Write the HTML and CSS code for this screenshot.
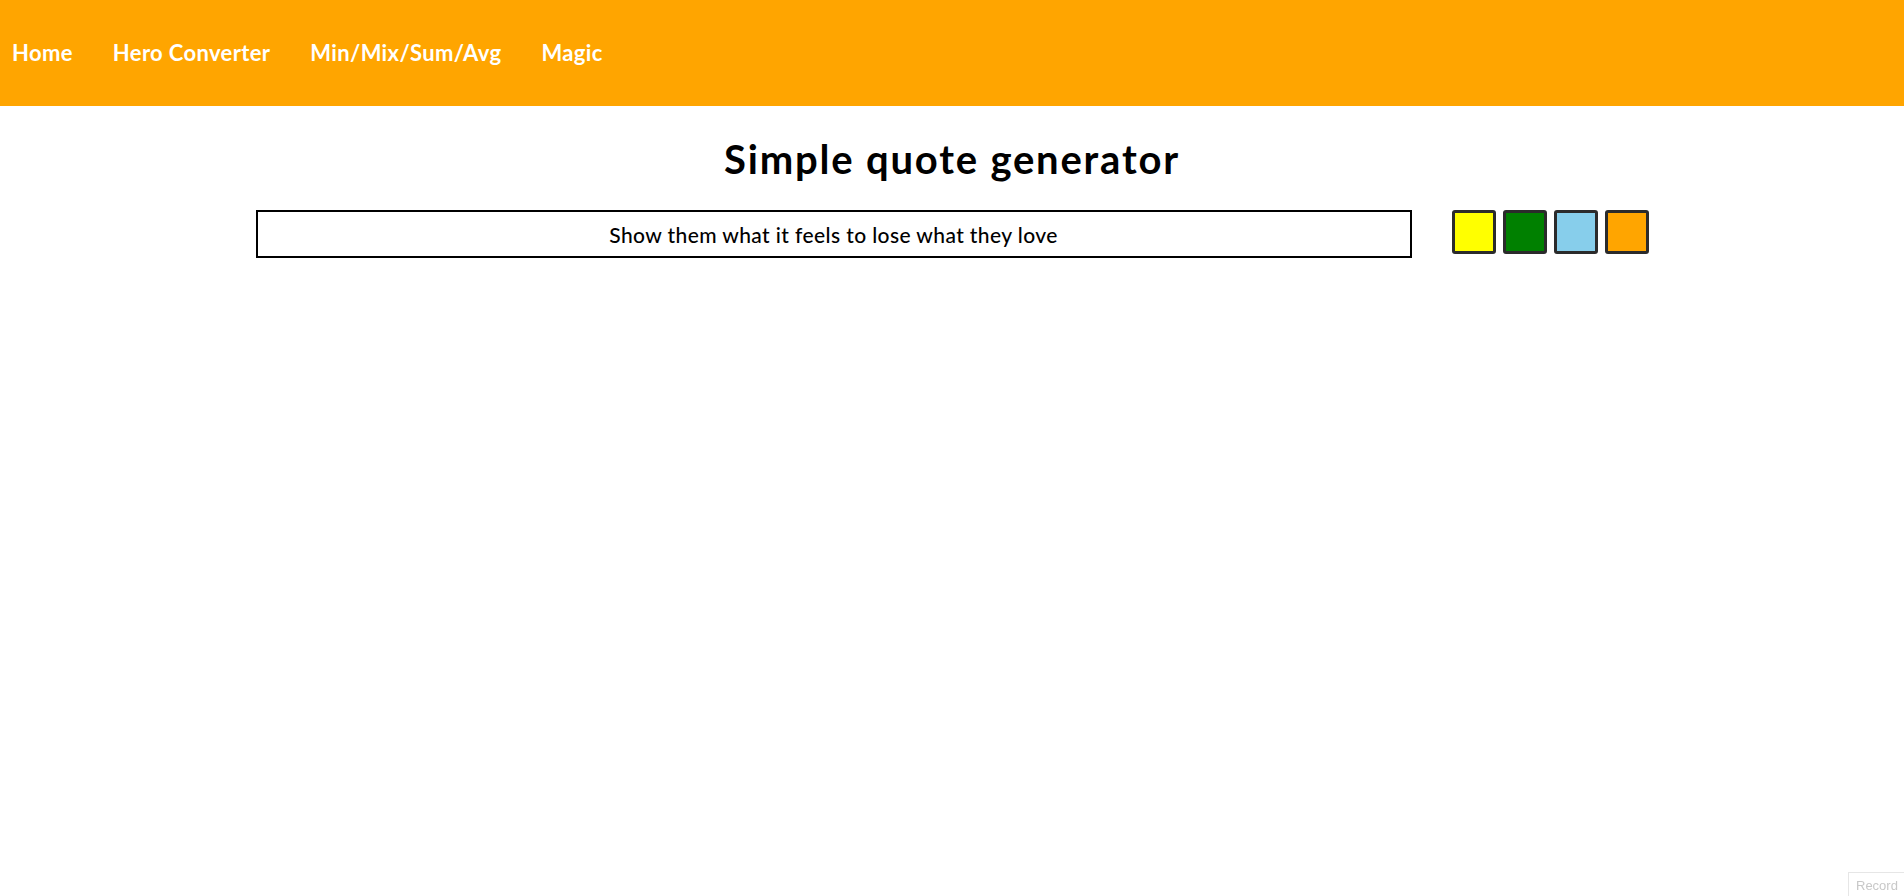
FILE: index.html
```html
<!DOCTYPE html>
<html lang="en">
<head>
<meta charset="utf-8">
<title>Simple quote generator</title>
<link rel="stylesheet" href="styles.css">
</head>
<body>
<nav class="navbar">
  <ul class="nav-list">
    <li><a class="nav-link" href="#">Home</a></li>
    <li><a class="nav-link" href="#">Hero Converter</a></li>
    <li><a class="nav-link" href="#">Min/Mix/Sum/Avg</a></li>
    <li><a class="nav-link" href="#">Magic</a></li>
  </ul>
</nav>
<main class="page">
  <h1 class="title">Simple quote generator</h1>
  <div class="quote-row">
    <div class="quote-box">Show them what it feels to lose what they love</div>
    <div class="swatches">
      <button class="swatch swatch-yellow" aria-label="yellow"></button>
      <button class="swatch swatch-green" aria-label="green"></button>
      <button class="swatch swatch-blue" aria-label="skyblue"></button>
      <button class="swatch swatch-orange" aria-label="orange"></button>
    </div>
  </div>
</main>
<div class="record">Record</div>
</body>
</html>
```
FILE: styles.css
```css
* { box-sizing: border-box; }
html, body { margin: 0; padding: 0; background: #fff; }
body { font-family: "Lato", "Noto Sans", sans-serif; color: #000; }

.navbar {
  height: 106px;
  background: #ffa500;
  display: flex;
  align-items: center;
  padding-left: 12px;
}
.nav-list {
  list-style: none;
  margin: 0;
  padding: 0 0 2px;
  display: flex;
  gap: 40px;
}
.nav-link {
  color: #fff;
  text-decoration: none;
  font-weight: 700;
  font-size: 22px;
  letter-spacing: 0.35px;
}

.page {
  display: flex;
  flex-direction: column;
  align-items: center;
}
.title {
  margin: 28px 0 0;
  font-size: 40px;
  font-weight: 700;
  line-height: 50px;
  letter-spacing: 1.8px;
}
.quote-row {
  margin-top: 26px;
  display: flex;
  align-items: flex-start;
  gap: 40px;
}
.quote-box {
  width: 1156px;
  height: 48px;
  border: 2px solid #000;
  display: flex;
  align-items: center;
  justify-content: center;
  font-size: 21px;
  font-weight: 500;
  letter-spacing: 0.4px;
}
.swatches { display: flex; gap: 7px; }
.swatch {
  width: 44px;
  height: 44px;
  padding: 0;
  border: 3px solid #2b2b2b;
  border-radius: 3px;
}
.swatch-yellow { background: #ffff00; }
.swatch-green { background: #008000; }
.swatch-blue { background: #87ceeb; }
.swatch-orange { background: #ffa500; }

.record {
  position: fixed;
  right: 0;
  bottom: 0;
  width: 56px;
  height: 24px;
  border: 1px solid #e6e6e6;
  border-right: none;
  border-bottom: none;
  color: #c8c8c8;
  font-family: "Liberation Sans", sans-serif;
  font-size: 13px;
  padding: 5px 0 0 7px;
  overflow: hidden;
  white-space: nowrap;
}
```
